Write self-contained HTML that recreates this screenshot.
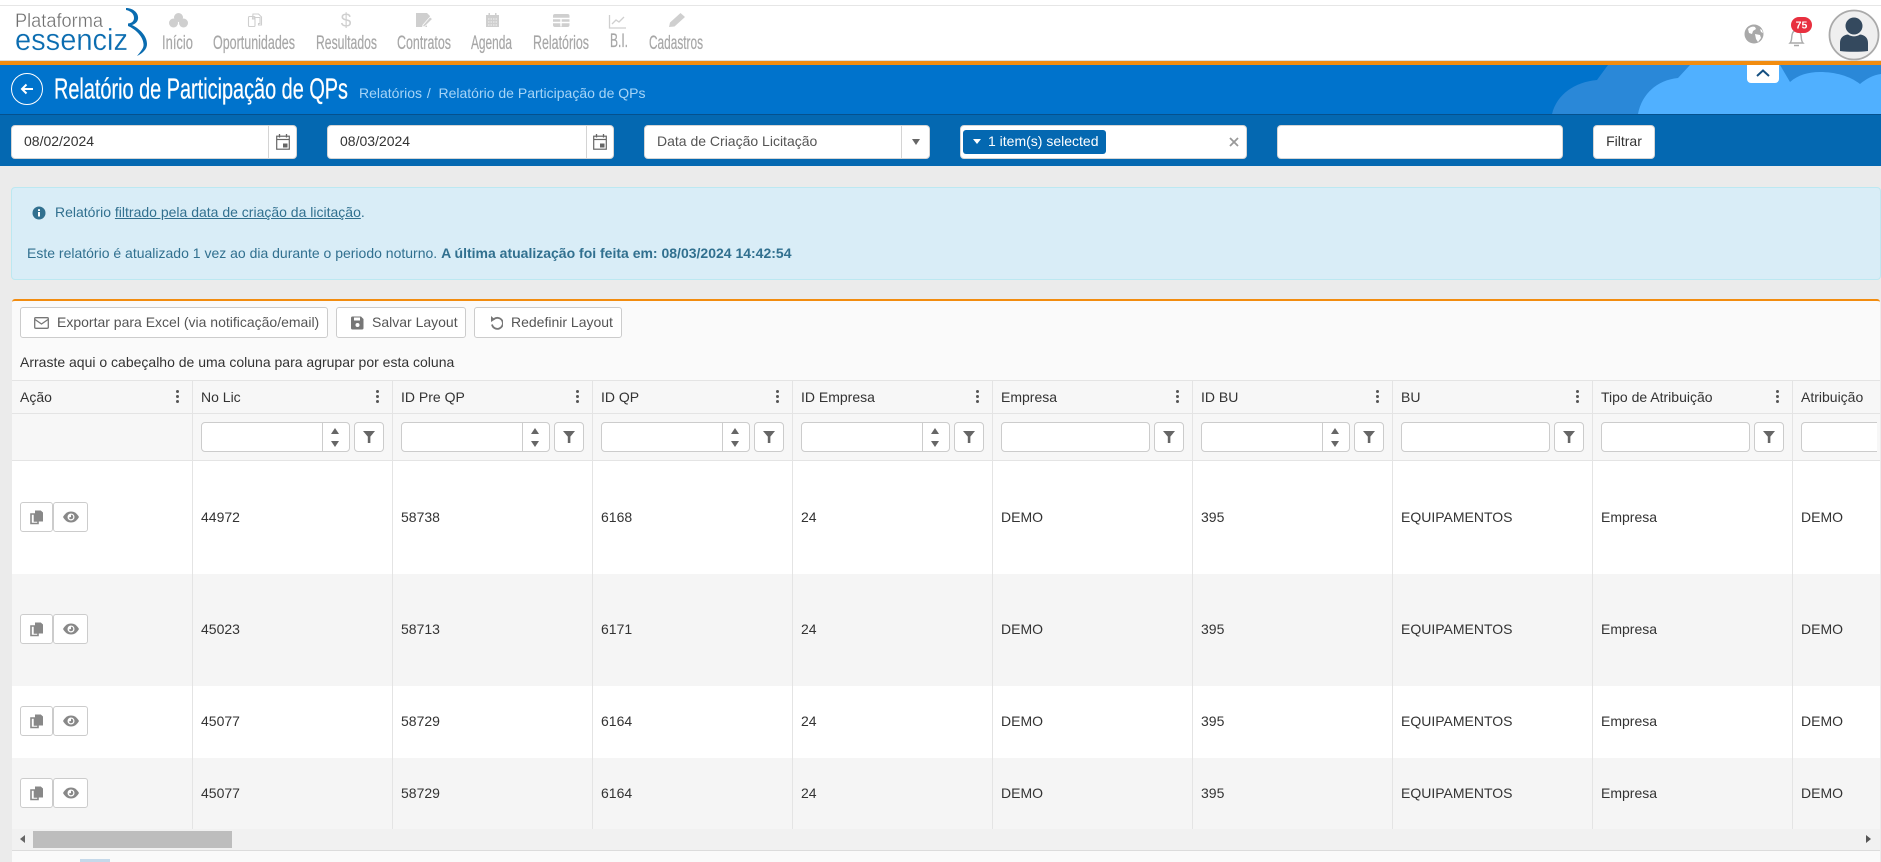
<!DOCTYPE html>
<html lang="pt-BR">
<head>
<meta charset="utf-8">
<title>Relatório de Participação de QPs</title>
<style>
html,body{margin:0;padding:0;width:1881px;height:862px;overflow:hidden;background:#ebebeb;font-family:"Liberation Sans",sans-serif;font-size:14px;color:#333}
.a{position:absolute;box-sizing:border-box}
.inp{background:#fff;border:1px solid #d5d5d5;border-radius:4px;height:34px;top:125px;line-height:31px;color:#333}
.sep{position:absolute;top:0;bottom:0;width:1px;background:#d4d4d4}
.btn{top:307px;height:31px;background:#fff;border:1px solid #ccc;border-radius:3px;color:#555;line-height:29px;white-space:nowrap}
.row{position:absolute;left:12px;display:flex;width:1865px;overflow:hidden}
.c{position:relative;flex:0 0 200px;width:200px;box-sizing:border-box;border-right:1px solid #e4e4e4;padding-left:8px;white-space:nowrap;color:#333}
.c:first-child{flex:0 0 181px;width:181px}
.c:last-child{border-right:0;flex:0 0 85px;width:85px}
.h .c{line-height:32px;height:32px}
.d .c{display:flex;align-items:center;padding-bottom:2px}
.k{position:absolute;right:13px;top:9px;width:3px;height:14px}
.k i{display:block;width:3px;height:3px;border-radius:50%;background:#555;margin-bottom:2px}
.fi{position:absolute;top:8px;left:8px;height:30px;background:#fff;border:1px solid #ccc;border-radius:4px;box-sizing:border-box;width:149px}
.ft{width:149px}
.fb{position:absolute;top:8px;left:161px;width:30px;height:30px;background:#fff;border:1px solid #ccc;border-radius:4px;box-sizing:border-box}
.fb svg{position:absolute;left:8px;top:8px;width:12px;height:12px}
.sp{position:absolute;left:120px;top:0;bottom:0;width:1px;background:#ccc}
.up,.dn{position:absolute;left:129px;width:0;height:0;border-left:4.5px solid transparent;border-right:4.5px solid transparent}
.up{top:5px;border-bottom:6px solid #666}
.dn{top:18px;border-top:6px solid #666}
.ab{width:33px;height:30px;background:#fff;border:1px solid #ccc;border-radius:3px;box-sizing:border-box;position:relative;flex:none}
.ab+.ab{width:35px}
.ab svg{position:absolute;left:50%;top:50%;transform:translate(-50%,-50%)}
</style>
</head>
<body>
<svg width="0" height="0" style="position:absolute">
<defs>
<symbol id="cal" viewBox="0 0 14 16"><rect x=".7" y="2.2" width="12.6" height="13" fill="none" stroke="#666" stroke-width="1.2"/><path d="M1 5.5h12" stroke="#666" stroke-width="1.2"/><path d="M3.5 0v3.5M10.5 0v3.5" stroke="#666" stroke-width="1.3"/><rect x="7" y="9.5" width="4.5" height="4" fill="#666"/></symbol>
<symbol id="fun" viewBox="0 0 14 14"><path d="M0 0h14L8.6 6.500V14H5.600V6.500z" fill="#666"/></symbol>
<symbol id="cp" viewBox="0 0 14 15"><path d="M1 4.500h3.500v7H8V14H1z" fill="none" stroke="#888" stroke-width="1.600"/><path d="M5 1h5.800L13 3v9H5z" fill="#888"/></symbol>
<symbol id="eye" viewBox="0 0 16 12"><path d="M0 6C2.500 1.800 5 .5 8 .5s5.500 1.300 8 5.500c-2.500 4.200-5 5.500-8 5.500S2.500 10.200 0 6z" fill="#888"/><circle cx="8" cy="6" r="3.500" fill="#fff"/><path d="M8 3.800A2.200 2.200 0 1 1 5.900 6.500L8 6z" fill="#888"/></symbol>
</defs>
</svg>

<!-- Header -->
<div class="a" style="left:0;top:0;width:1881px;height:5px;background:#fff"></div>
<div class="a" style="left:0;top:5px;width:1881px;height:1px;background:#e6e6e6"></div>
<div class="a" style="left:0;top:6px;width:1881px;height:55px;background:#fff;border-bottom:1px solid #ddd"></div>
<div class="a" style="left:0;top:61px;width:1881px;height:4px;background:#f28c0f"></div>
<div class="a" style="left:0;top:65px;width:1881px;height:50px;background:#0073cc;border-bottom:1px solid #05518e"></div>
<div class="a" style="left:0;top:115px;width:1881px;height:51px;background:#0468b1"></div>

<svg class="a" style="left:0;top:0" width="1881" height="166" viewBox="0 0 1881 166">
  <!-- logo -->
  <text x="15" y="27" font-size="19" fill="#6f6f6f" stroke="#fff" stroke-width=".35" textLength="88" lengthAdjust="spacingAndGlyphs" font-family="Liberation Sans">Plataforma</text>
  <text x="15" y="50" font-size="31" fill="#0a6cb0" stroke="#fff" stroke-width=".3" textLength="113" lengthAdjust="spacingAndGlyphs" font-family="Liberation Sans">essenciz</text>
  <path d="M126 8C133 8 139 13 138 19C137.500 22 135 24 132 25C140 29 147 36 147 44C147 49 143 53 137 56C141 51 144 48 143.500 44C143 36 135 29 128 26L128 23.500C132 23 134 21 134 18C134 14 131 11 126 10Z" fill="#0a6cb0"/>

  <!-- nav icons -->
  <g fill="#cfcfcf">
    <circle cx="178.500" cy="17.500" r="4.500"/><circle cx="173.500" cy="23" r="4.500"/><circle cx="183.500" cy="23" r="4.500"/>
    <path d="M416 13h11l3 3v5l-3 3.500V27h-11z"/>
    <path d="M423 25l7-8 2.500 2-7 7-3 1z" stroke="#fff" stroke-width=".8"/>
    <path d="M486 15h13v12h-13zM488.500 13h1.500v3h-1.500zM495 13h1.500v3H495z"/>
    <path d="M555 14h12.500a2 2 0 0 1 2 2v9a2 2 0 0 1-2 2H555a2 2 0 0 1-2-2v-9a2 2 0 0 1 2-2z"/>
    <path d="M669 27l1-4.500 10.500-9.500 4.500 4-10.500 9.500z"/>
  </g>
  <path d="M253 14h5.500l3 3v8h-3v-1.500h1.500v-6h-6v1.500h-1.500z" fill="none" stroke="#cfcfcf" stroke-width="1.100"/>
  <rect x="248.500" y="16.500" width="6.500" height="10" rx="1" fill="none" stroke="#cfcfcf" stroke-width="1.100"/>
  <path d="M488 19h9M488 22h9M488 25h9" stroke="#fff" stroke-width=".8" stroke-dasharray="1.500 1"/>
  <path d="M553 18.500h16.500M561 18.500v8M553 22.500h16.500" stroke="#fff" stroke-width="1.400"/>
  <text x="346" y="27" font-size="19" fill="#cfcfcf" text-anchor="middle" font-family="Liberation Sans">$</text>
  <path d="M609.500 15v13H626" fill="none" stroke="#cfcfcf" stroke-width="1.300"/>
  <path d="M612 24l4-4 3 2 5-5" fill="none" stroke="#cfcfcf" stroke-width="1.300"/>

  <!-- nav text -->
  <g font-size="19" fill="#a7a7a7" stroke="#a7a7a7" stroke-width=".2" font-family="Liberation Sans">
    <text x="162" y="49" textLength="31" lengthAdjust="spacingAndGlyphs">Início</text>
    <text x="213" y="49" textLength="82" lengthAdjust="spacingAndGlyphs">Oportunidades</text>
    <text x="316" y="49" textLength="61" lengthAdjust="spacingAndGlyphs">Resultados</text>
    <text x="397" y="49" textLength="54" lengthAdjust="spacingAndGlyphs">Contratos</text>
    <text x="471" y="49" textLength="41" lengthAdjust="spacingAndGlyphs">Agenda</text>
    <text x="533" y="49" textLength="56" lengthAdjust="spacingAndGlyphs">Relatórios</text>
    <text x="610" y="47" textLength="18" lengthAdjust="spacingAndGlyphs">B.I.</text>
    <text x="649" y="49" textLength="54" lengthAdjust="spacingAndGlyphs">Cadastros</text>
  </g>

  <!-- globe -->
  <circle cx="1754" cy="34" r="9.500" fill="#a9a9a9"/>
  <path d="M1748 29c2-2 5-3 7-2l1 2-3 2-1 3-3-1zM1755 34l5 1 1 3-3 4-2-3zM1760 29l2 1 1 3-2-1z" fill="#fff"/>
  <!-- bell -->
  <path d="M1790 43c2-2 1.500-5 2-8 .5-3 2-4.500 4.500-4.500s4 1.500 4.500 4.500 0 6 2 8z" fill="none" stroke="#aaa" stroke-width="1.400"/>
  <path d="M1794 45.500h5" stroke="#aaa" stroke-width="1.500"/>
  <rect x="1791" y="17" width="21" height="16" rx="8" fill="#e8303f"/>
  <text x="1801.500" y="28.500" font-size="10.500" font-weight="bold" fill="#fff" text-anchor="middle" font-family="Liberation Sans">75</text>
  <!-- avatar -->
  <circle cx="1854" cy="35" r="24.500" fill="#efefef" stroke="#aaa" stroke-width="1.800"/>
  <circle cx="1854" cy="26" r="8.500" fill="#34495e"/>
  <path d="M1840 51v-8c0-5 3-8 8-8.500 4 2.500 8 2.500 12 0 5 .5 8 3.500 8 8.500v8c-8 1-20 1-28 0z" fill="#34495e"/>

  <!-- clouds -->
  <path d="M1552 114c5-20 23-32 45-34l11-15h273v49z" fill="#2a88d8"/>
  <path d="M1638 114C1642 93 1658 80 1678 78L1690 65H1780L1790 82C1798 75 1808 72 1820 72C1835 72 1850 76 1860 84C1866 79 1873 75 1881 74V114Z" fill="#50b0ff"/>

  <!-- collapse tab -->
  <path d="M1747 65h32v14a4 4 0 0 1-4 4h-24a4 4 0 0 1-4-4z" fill="#fff"/>
  <path d="M1757 76l6-5.500 6 5.500" fill="none" stroke="#154f80" stroke-width="2"/>

  <!-- back -->
  <circle cx="27" cy="89" r="15.500" fill="none" stroke="#fff" stroke-width="1"/>
  <path d="M33 89H22M26.500 84.500L22 89l4.500 4.500" fill="none" stroke="#fff" stroke-width="2"/>
  <!-- title -->
  <text x="54" y="98.500" font-size="29" fill="#fff" stroke="#fff" stroke-width=".25" textLength="294" lengthAdjust="spacingAndGlyphs" font-family="Liberation Sans">Relatório de Participação de QPs</text>
</svg>
<div class="a" style="left:359px;top:84px;color:#a5d4f7;font-size:14px;white-space:nowrap;line-height:18px">Relatórios&nbsp; <span style="margin-left:-3px">/</span>&nbsp; Relatório de Participação de QPs</div>

<!-- Filters -->
<div class="a inp" style="left:11px;width:286px;padding-left:12px">08/02/2024<span class="sep" style="left:256px"></span><svg style="position:absolute;left:264px;top:8px" width="14" height="16"><use href="#cal"/></svg></div>
<div class="a inp" style="left:327px;width:287px;padding-left:12px">08/03/2024<span class="sep" style="left:258px"></span><svg style="position:absolute;left:265px;top:8px" width="14" height="16"><use href="#cal"/></svg></div>
<div class="a inp" style="left:644px;width:286px;padding-left:12px;color:#555">Data de Criação Licitação<span class="sep" style="left:256px"></span><span style="position:absolute;left:267px;top:13px;border-left:4.500px solid transparent;border-right:4.500px solid transparent;border-top:6px solid #666"></span></div>
<div class="a inp" style="left:960px;width:287px">
  <div class="a" style="left:2px;top:4px;width:143px;height:24px;background:#0468b1;border-radius:3px;color:#fff;line-height:23px;padding-left:25px;white-space:nowrap">1 item(s) selected<span style="position:absolute;left:10px;top:9px;border-left:4px solid transparent;border-right:4px solid transparent;border-top:5px solid #fff"></span></div>
  <svg style="position:absolute;left:268px;top:11px" width="10" height="10"><path d="M1 1l8 8M9 1l-8 8" stroke="#999" stroke-width="1.800"/></svg>
</div>
<div class="a inp" style="left:1277px;width:286px"></div>
<div class="a inp" style="left:1593px;width:62px;text-align:center">Filtrar</div>

<!-- Alert -->
<div class="a" style="left:11px;top:187px;width:1870px;height:93px;background:#d9edf7;border:1px solid #bce8f1;border-radius:4px;color:#31708f"></div>
<svg class="a" style="left:32px;top:206px" width="14" height="14"><circle cx="7" cy="7" r="6.500" fill="#31708f"/><rect x="6" y="6" width="2" height="4.500" fill="#fff"/><rect x="6" y="3.200" width="2" height="1.800" fill="#fff"/></svg>
<div class="a" style="left:55px;top:203px;line-height:18px;color:#31708f;white-space:nowrap">Relatório <u>filtrado pela data de criação da licitação</u>.</div>
<div class="a" style="left:27px;top:244px;line-height:18px;color:#31708f;white-space:nowrap">Este relatório é atualizado 1 vez ao dia durante o periodo noturno. <b>A última atualização foi feita em: 08/03/2024 14:42:54</b></div>

<!-- Grid container -->
<div class="a" style="left:12px;top:299px;width:1868px;height:563px;background:#fafafa;border-top:2px solid #f28c0f;border-radius:3px 3px 0 0"></div>

<div class="a btn" style="left:20px;width:308px;padding-left:36px">Exportar para Excel (via notificação/email)
  <svg style="position:absolute;left:13px;top:9px" width="15" height="12"><rect x=".7" y=".7" width="13.600" height="10.600" rx="1" fill="none" stroke="#777" stroke-width="1.300"/><path d="M1 2.500l6.500 4.500L14 2.500" fill="none" stroke="#777" stroke-width="1.300"/></svg>
</div>
<div class="a btn" style="left:336px;width:130px;padding-left:35px">Salvar Layout
  <svg style="position:absolute;left:14px;top:8px" width="13" height="14"><path d="M1.500 0.500H10L12.500 3V12a1.500 1.500 0 0 1-1.500 1.500H1.500A1.500 1.500 0 0 1 0 12V2A1.500 1.500 0 0 1 1.500 .5z" fill="#777"/><rect x="3" y="1.500" width="6" height="3" fill="#fff"/><circle cx="6.500" cy="9" r="2" fill="#fff"/></svg>
</div>
<div class="a btn" style="left:474px;width:148px;padding-left:36px">Redefinir Layout
  <svg style="position:absolute;left:14px;top:8px" width="14" height="14"><path d="M4 2.500A5.500 5.500 0 1 1 2 8" fill="none" stroke="#777" stroke-width="1.800" transform="translate(1 .5)"/><path d="M2 0l4 3.500-4 2.500z" fill="#777"/></svg>
</div>

<div class="a" style="left:20px;top:353px;line-height:18px;color:#333;white-space:nowrap">Arraste aqui o cabeçalho de uma coluna para agrupar por esta coluna</div>

<!-- Header row -->
<div class="a" style="left:12px;top:380px;width:1868px;height:81px;background:#f7f7f7;border-top:1px solid #e4e4e4;border-bottom:1px solid #e4e4e4"></div>
<div class="a" style="left:12px;top:413px;width:1868px;height:1px;background:#e4e4e4"></div>
<div class="row h" style="top:381px;height:32px">
  <div class="c">Ação<span class="k"><i></i><i></i><i></i></span></div>
  <div class="c">No Lic<span class="k"><i></i><i></i><i></i></span></div>
  <div class="c">ID Pre QP<span class="k"><i></i><i></i><i></i></span></div>
  <div class="c">ID QP<span class="k"><i></i><i></i><i></i></span></div>
  <div class="c">ID Empresa<span class="k"><i></i><i></i><i></i></span></div>
  <div class="c">Empresa<span class="k"><i></i><i></i><i></i></span></div>
  <div class="c">ID BU<span class="k"><i></i><i></i><i></i></span></div>
  <div class="c">BU<span class="k"><i></i><i></i><i></i></span></div>
  <div class="c">Tipo de Atribuição<span class="k"><i></i><i></i><i></i></span></div>
  <div class="c">Atribuição</div>
</div>
<!-- Filter row -->
<div class="row" style="top:414px;height:46px">
  <div class="c"></div>
  <div class="c"><div class="fi"><span class="sp"></span><span class="up"></span><span class="dn"></span></div><div class="fb"><svg viewBox="0 0 14 14"><use href="#fun"/></svg></div></div>
  <div class="c"><div class="fi"><span class="sp"></span><span class="up"></span><span class="dn"></span></div><div class="fb"><svg viewBox="0 0 14 14"><use href="#fun"/></svg></div></div>
  <div class="c"><div class="fi"><span class="sp"></span><span class="up"></span><span class="dn"></span></div><div class="fb"><svg viewBox="0 0 14 14"><use href="#fun"/></svg></div></div>
  <div class="c"><div class="fi"><span class="sp"></span><span class="up"></span><span class="dn"></span></div><div class="fb"><svg viewBox="0 0 14 14"><use href="#fun"/></svg></div></div>
  <div class="c"><div class="fi ft"></div><div class="fb"><svg viewBox="0 0 14 14"><use href="#fun"/></svg></div></div>
  <div class="c"><div class="fi"><span class="sp"></span><span class="up"></span><span class="dn"></span></div><div class="fb"><svg viewBox="0 0 14 14"><use href="#fun"/></svg></div></div>
  <div class="c"><div class="fi ft"></div><div class="fb"><svg viewBox="0 0 14 14"><use href="#fun"/></svg></div></div>
  <div class="c"><div class="fi ft"></div><div class="fb"><svg viewBox="0 0 14 14"><use href="#fun"/></svg></div></div>
  <div class="c"><div class="fi ft" style="border-right:0;border-radius:4px 0 0 4px"></div></div>
</div>

<!-- Data rows -->
<div class="a" style="left:12px;top:461px;width:1868px;height:113px;background:#fff"></div>
<div class="row d" style="top:461px;height:113px">
  <div class="c"><div class="ab"><svg width="14" height="15"><use href="#cp"/></svg></div><div class="ab"><svg width="16" height="12"><use href="#eye"/></svg></div></div>
  <div class="c">44972</div><div class="c">58738</div><div class="c">6168</div><div class="c">24</div><div class="c">DEMO</div><div class="c">395</div><div class="c">EQUIPAMENTOS</div><div class="c">Empresa</div><div class="c">DEMO</div>
</div>
<div class="a" style="left:12px;top:574px;width:1868px;height:112px;background:#f5f5f5"></div>
<div class="row d" style="top:574px;height:112px">
  <div class="c"><div class="ab"><svg width="14" height="15"><use href="#cp"/></svg></div><div class="ab"><svg width="16" height="12"><use href="#eye"/></svg></div></div>
  <div class="c">45023</div><div class="c">58713</div><div class="c">6171</div><div class="c">24</div><div class="c">DEMO</div><div class="c">395</div><div class="c">EQUIPAMENTOS</div><div class="c">Empresa</div><div class="c">DEMO</div>
</div>
<div class="a" style="left:12px;top:686px;width:1868px;height:72px;background:#fff"></div>
<div class="row d" style="top:686px;height:72px">
  <div class="c"><div class="ab"><svg width="14" height="15"><use href="#cp"/></svg></div><div class="ab"><svg width="16" height="12"><use href="#eye"/></svg></div></div>
  <div class="c">45077</div><div class="c">58729</div><div class="c">6164</div><div class="c">24</div><div class="c">DEMO</div><div class="c">395</div><div class="c">EQUIPAMENTOS</div><div class="c">Empresa</div><div class="c">DEMO</div>
</div>
<div class="a" style="left:12px;top:758px;width:1868px;height:71px;background:#f5f5f5"></div>
<div class="row d" style="top:758px;height:71px">
  <div class="c"><div class="ab"><svg width="14" height="15"><use href="#cp"/></svg></div><div class="ab"><svg width="16" height="12"><use href="#eye"/></svg></div></div>
  <div class="c">45077</div><div class="c">58729</div><div class="c">6164</div><div class="c">24</div><div class="c">DEMO</div><div class="c">395</div><div class="c">EQUIPAMENTOS</div><div class="c">Empresa</div><div class="c">DEMO</div>
</div>

<!-- Scrollbar -->
<div class="a" style="left:12px;top:829px;width:1868px;height:21px;background:#f1f1f1"></div>
<div class="a" style="left:33px;top:831px;width:199px;height:17px;background:#bdbdbd"></div>
<div class="a" style="left:20px;top:835px;border-top:4.500px solid transparent;border-bottom:4.500px solid transparent;border-right:5px solid #666"></div>
<div class="a" style="left:1866px;top:835px;border-top:4.500px solid transparent;border-bottom:4.500px solid transparent;border-left:5px solid #555"></div>
<div class="a" style="left:12px;top:850px;width:1868px;height:1px;background:#dcdcdc"></div>
<div class="a" style="left:80px;top:859px;width:30px;height:3px;background:#c5d9ea"></div>
</body>
</html>
